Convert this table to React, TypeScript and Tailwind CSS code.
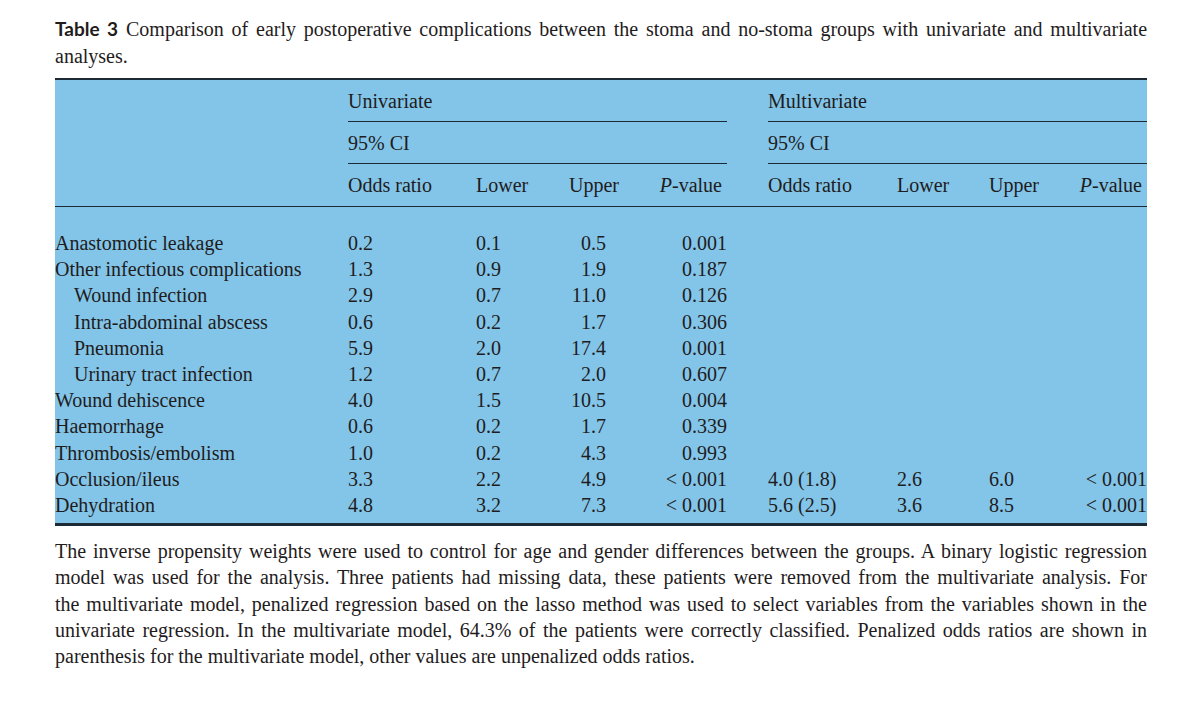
import React from 'react';

type Row = {
  label: string;
  indent?: boolean;
  uni: [string, string, string, string];
  multi?: [string, string, string, string];
};

const rows: Row[] = [
  { label: 'Anastomotic leakage', uni: ['0.2', '0.1', '0.5', '0.001'] },
  { label: 'Other infectious complications', uni: ['1.3', '0.9', '1.9', '0.187'] },
  { label: 'Wound infection', indent: true, uni: ['2.9', '0.7', '11.0', '0.126'] },
  { label: 'Intra-abdominal abscess', indent: true, uni: ['0.6', '0.2', '1.7', '0.306'] },
  { label: 'Pneumonia', indent: true, uni: ['5.9', '2.0', '17.4', '0.001'] },
  { label: 'Urinary tract infection', indent: true, uni: ['1.2', '0.7', '2.0', '0.607'] },
  { label: 'Wound dehiscence', uni: ['4.0', '1.5', '10.5', '0.004'] },
  { label: 'Haemorrhage', uni: ['0.6', '0.2', '1.7', '0.339'] },
  { label: 'Thrombosis/embolism', uni: ['1.0', '0.2', '4.3', '0.993'] },
  {
    label: 'Occlusion/ileus',
    uni: ['3.3', '2.2', '4.9', '< 0.001'],
    multi: ['4.0 (1.8)', '2.6', '6.0', '< 0.001'],
  },
  {
    label: 'Dehydration',
    uni: ['4.8', '3.2', '7.3', '< 0.001'],
    multi: ['5.6 (2.5)', '3.6', '8.5', '< 0.001'],
  },
];

const footnote = [
  'The inverse propensity weights were used to control for age and gender differences between the groups. A binary logistic regression',
  'model was used for the analysis. Three patients had missing data, these patients were removed from the multivariate analysis. For',
  'the multivariate model, penalized regression based on the lasso method was used to select variables from the variables shown in the',
  'univariate regression. In the multivariate model, 64.3% of the patients were correctly classified. Penalized odds ratios are shown in',
];

const cols = 'grid grid-cols-[293px_128px_93px_71px_87px_41px_129px_92px_71px_87px]';

const App: React.FC = () => {
  return (
    <div className="min-h-[707px] bg-white pl-[55px] pt-[15px] text-[#1f1c1d] font-['Liberation_Serif',serif] text-[20px]">
      <div className="w-[1092px]">
        {/* caption */}
        <div className="leading-[27px] [text-align-last:justify]">
          <span className="font-['Lato',sans-serif] font-bold text-[19px] mr-[8px]">Table 3</span>
          Comparison of early postoperative complications between the stoma and no-stoma groups with univariate and multivariate
        </div>
        <div className="leading-[27px]">analyses.</div>

        <div className="mt-[8px] bg-[#83c5e8] border-t-2 border-b-[3px] border-[#1c2a36]">
          {/* header */}
          <div className={cols}>
            <div className="h-[42px]" />
            <div className="col-span-4 h-[42px] flex items-center border-b-[1.5px] border-[#1c2a36]">Univariate</div>
            <div />
            <div className="col-span-4 h-[42px] flex items-center border-b-[1.5px] border-[#1c2a36]">Multivariate</div>

            <div className="h-[42px]" />
            <div className="col-span-4 h-[42px] flex items-center border-b-[1.5px] border-[#1c2a36]">95% CI</div>
            <div />
            <div className="col-span-4 h-[42px] flex items-center border-b-[1.5px] border-[#1c2a36]">95% CI</div>
          </div>
          <div className={`${cols} border-b-[1.5px] border-[#1c2a36]`}>
            <div className="h-[42px]" />
            <div className="flex items-center">Odds ratio</div>
            <div className="flex items-center">Lower</div>
            <div className="flex items-center">Upper</div>
            <div className="flex items-center justify-end pr-[5px]">
              <span><i>P</i>-value</span>
            </div>
            <div />
            <div className="flex items-center">Odds ratio</div>
            <div className="flex items-center">Lower</div>
            <div className="flex items-center">Upper</div>
            <div className="flex items-center justify-end pr-[5px]">
              <span><i>P</i>-value</span>
            </div>
          </div>

          {/* body */}
          <div className="pt-[23px] pb-[5px]">
            {rows.map((r) => (
              <div key={r.label} className={`${cols} leading-[26.2px]`}>
                <div className={r.indent ? 'pl-[19px]' : ''}>{r.label}</div>
                <div>{r.uni[0]}</div>
                <div>{r.uni[1]}</div>
                <div>
                  <span className="inline-block w-[37px] text-right">{r.uni[2]}</span>
                </div>
                <div className="text-right">{r.uni[3]}</div>
                <div />
                <div>{r.multi?.[0]}</div>
                <div>{r.multi?.[1]}</div>
                <div>{r.multi?.[2]}</div>
                <div className="text-right">{r.multi?.[3]}</div>
              </div>
            ))}
          </div>
        </div>

        {/* footnote */}
        <div className="mt-[12px] leading-[26.2px]">
          {footnote.map((line) => (
            <div key={line} className="[text-align-last:justify]">
              {line}
            </div>
          ))}
          <div>parenthesis for the multivariate model, other values are unpenalized odds ratios.</div>
        </div>
      </div>
    </div>
  );
};

export default App;
